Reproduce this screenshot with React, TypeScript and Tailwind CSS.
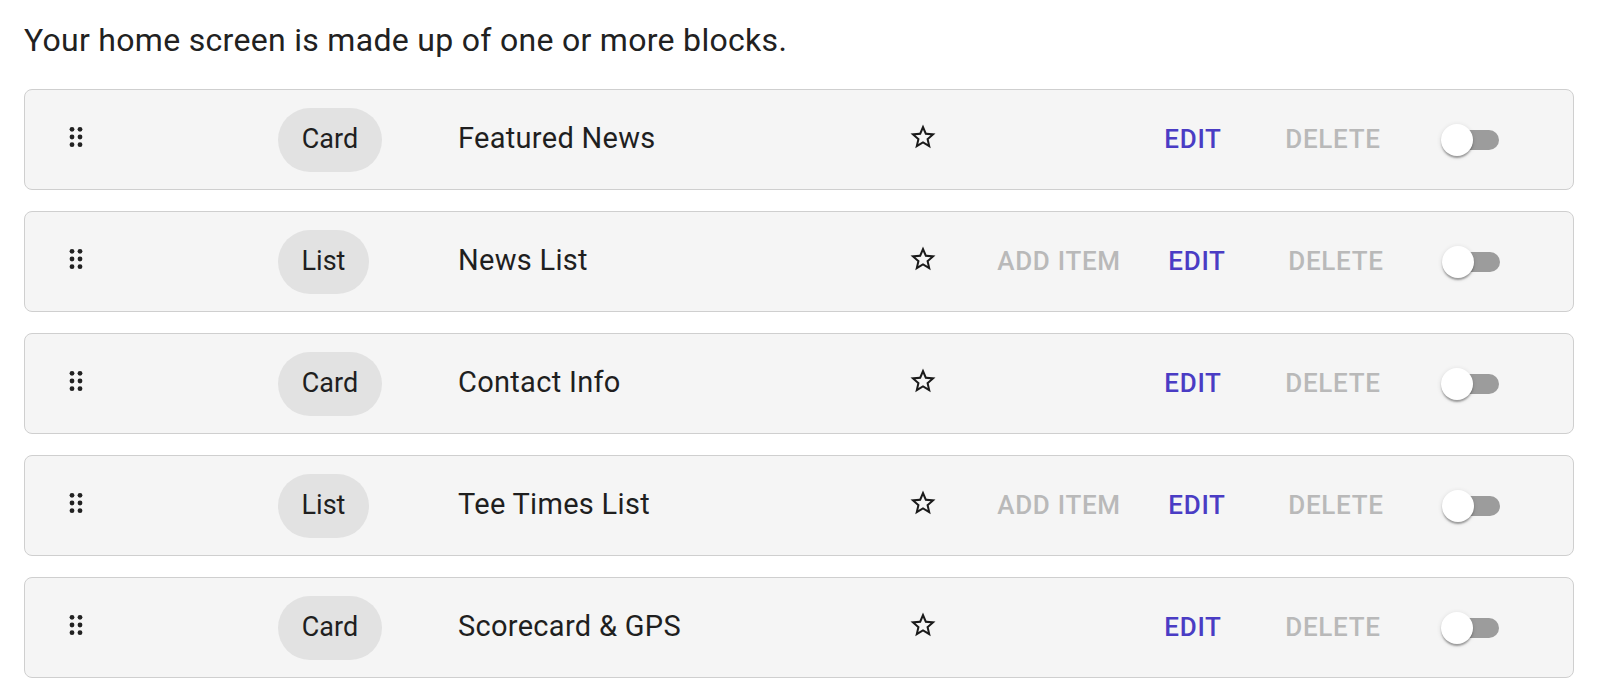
import React from "react";

type Row = { kind: "Card" | "List"; title: string };

const rows: Row[] = [
  { kind: "Card", title: "Featured News" },
  { kind: "List", title: "News List" },
  { kind: "Card", title: "Contact Info" },
  { kind: "List", title: "Tee Times List" },
  { kind: "Card", title: "Scorecard & GPS" },
];

function DragDots() {
  return (
    <svg width="16" height="22" viewBox="0 0 16 22" className="block">
      {[0, 1, 2].map((r) =>
        [0, 1].map((c) => (
          <circle key={`${r}-${c}`} cx={4 + c * 8} cy={3.3 + r * 7.7} r={2.4} fill="#222" />
        ))
      )}
    </svg>
  );
}

function StarIcon() {
  return (
    <svg width="30" height="30" viewBox="0 0 24 24" className="block">
      <path
        fill="#1a1a1a"
        d="M22 9.24l-7.19-.62L12 2 9.19 8.63 2 9.24l5.46 4.73L5.82 21 12 17.27 18.18 21l-1.63-7.03L22 9.24zM12 15.4l-3.76 2.27 1-4.28-3.32-2.88 4.38-.38L12 6.1l1.71 4.04 4.38.38-3.32 2.88 1 4.28L12 15.4z"
      />
    </svg>
  );
}

function Toggle() {
  return (
    <div className="relative w-[58px] h-[32px]">
      <div className="absolute left-[11px] right-0 top-[6px] h-[20px] rounded-full bg-[#9c9c9c]" />
      <div className="absolute left-0 top-0 w-[32px] h-[32px] rounded-full bg-white shadow-[0_3px_2px_-1px_rgba(0,0,0,0.22),0_2px_2px_0_rgba(0,0,0,0.14),0_1px_5px_0_rgba(0,0,0,0.12)]" />
    </div>
  );
}

function BlockRow({ row }: { row: Row }) {
  const isList = row.kind === "List";
  return (
    <div className="flex items-center h-[101px] rounded-[8px] border border-[#cfcfcf] bg-[#f5f5f5]">
      <div className="w-[253px] pl-[43px] flex items-center -mt-[5px]">
        <DragDots />
      </div>
      <div className="w-[180px] flex items-center">
        <span
          className={`flex items-center justify-center h-[64px] rounded-full bg-[#e2e2e2] text-[27px] text-[#1f1f1f] ${
            isList ? "w-[91px]" : "w-[104px]"
          }`}
        >
          {row.kind}
        </span>
      </div>
      <div className="w-[450px] text-[29px] tracking-[0.3px] text-[#1f1f1f] -mt-[2px]">{row.title}</div>
      <div className="w-[30px] -mt-[6px]">
        <StarIcon />
      </div>
      <div className="ml-[51px] w-[140px] text-center font-medium text-[26px] tracking-[0.7px] text-[#b9b9b9]">
        {isList ? "ADD ITEM" : ""}
      </div>
      <div
        className={`w-[80px] text-center font-medium text-[26px] tracking-[0.7px] text-[#4a3cc4] ${
          isList ? "ml-[28px]" : "ml-[24px]"
        }`}
      >
        EDIT
      </div>
      <div
        className={`w-[120px] text-center font-medium text-[26px] tracking-[0.7px] text-[#b9b9b9] ${
          isList ? "ml-[39px]" : "ml-[40px]"
        }`}
      >
        DELETE
      </div>
      <div className={isList ? "ml-[46px]" : "ml-[48px]"}>
        <Toggle />
      </div>
    </div>
  );
}

export default function App() {
  return (
    <div
      className="bg-white w-full min-h-[694px] px-[24px] pt-[21px]"
      style={{ fontFamily: "Roboto, 'Liberation Sans', Arial, sans-serif" }}
    >
      <p className="text-[32px] leading-[38px] tracking-[0.3px] text-[#212121] mb-[30px]">
        Your home screen is made up of one or more blocks.
      </p>
      <div className="flex flex-col gap-[21px]">
        {rows.map((r) => (
          <BlockRow key={r.title} row={r} />
        ))}
      </div>
    </div>
  );
}
